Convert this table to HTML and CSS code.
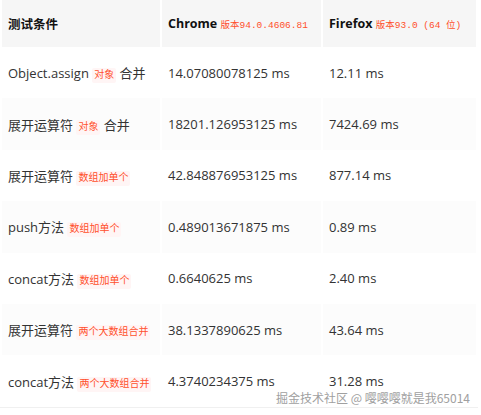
FILE: index.html
```html
<!DOCTYPE html>
<html>
<head>
<meta charset="utf-8">
<link rel="stylesheet" href="styles.css">
</head>
<body>
<div class="wrap">
<table class="tbl">
<thead>
<tr>
<th class="c1">测试条件</th>
<th class="c2">Chrome <code>版本94.0.4606.81</code></th>
<th class="c3">Firefox <code>版本93.0 (64 位)</code></th>
</tr>
</thead>
<tbody>
<tr><td>Object.assign <code>对象</code> 合并</td><td>14.07080078125 ms</td><td>12.11 ms</td></tr>
<tr><td>展开运算符 <code>对象</code> 合并</td><td>18201.126953125 ms</td><td>7424.69 ms</td></tr>
<tr><td>展开运算符 <code>数组加单个</code></td><td>42.848876953125 ms</td><td>877.14 ms</td></tr>
<tr><td>push方法 <code>数组加单个</code></td><td>0.489013671875 ms</td><td>0.89 ms</td></tr>
<tr><td>concat方法 <code>数组加单个</code></td><td>0.6640625 ms</td><td>2.40 ms</td></tr>
<tr><td>展开运算符 <code>两个大数组合并</code></td><td>38.1337890625 ms</td><td>43.64 ms</td></tr>
<tr><td>concat方法 <code>两个大数组合并</code></td><td>4.3740234375 ms</td><td>31.28 ms</td></tr>
</tbody>
</table>
<div class="mark">掘金技术社区 @ 嘤嘤嘤就是我65014</div>
</div>
</body>
</html>
```
FILE: styles.css
```css
html, body {
  margin: 0;
  padding: 0;
  background: #fff;
}
body {
  font-family: "Open Sans", "Noto Sans CJK SC", sans-serif;
  color: #333;
}
.wrap {
  position: relative;
  width: 481px;
  height: 415px;
}
.tbl {
  border-collapse: separate;
  border-spacing: 2px 0;
  width: 478px;
  table-layout: fixed;
  font-size: 13px;
  border-bottom: 1px solid #f0f0f0;
}
.tbl th {
  background: #f6f6f6;
  height: 47px;
  padding: 0 6px;
  text-align: left;
  font-weight: 700;
  font-size: 12.5px;
  color: #111;
  white-space: nowrap;
}
.c1 { width: 146px; }
.c2 { width: 147px; }
.tbl td {
  height: 51.4px;
  padding: 0 6px;
  white-space: nowrap;
  vertical-align: middle;
}
.tbl tbody tr:nth-child(even) td {
  background: #fcfcfc;
}
code {
  font-family: "Liberation Mono", "Noto Sans CJK SC", monospace;
  font-size: 10px;
  color: #ff502c;
  background: #fff5f5;
  padding: 2px 2px;
  border-radius: 2px;
  font-weight: 400;
}
.tbl th code {
  font-size: 9.5px;
  padding: 2px 0;
  background: transparent;
}
.mark {
  position: absolute;
  right: 11px;
  top: 389px;
  font-size: 12px;
  color: #a0a0a0;
  text-shadow: 0 0 1px #fff;
  font-family: "Noto Sans CJK SC", sans-serif;
}
```
